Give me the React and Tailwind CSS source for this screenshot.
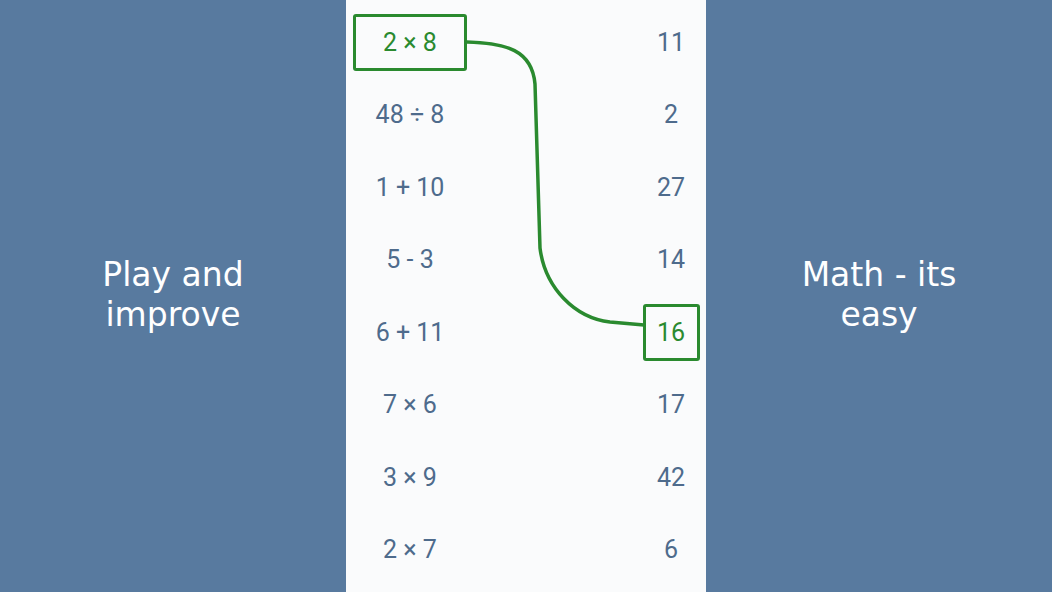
import React from 'react'

const LEFT = ['2 × 8', '48 ÷ 8', '1 + 10', '5 - 3', '6 + 11', '7 × 6', '3 × 9', '2 × 7']
const RIGHT = ['11', '2', '27', '14', '16', '17', '42', '6']

function SidePanel({ lines }) {
  return (
    <div className="flex-1 bg-[#587a9f] flex items-center justify-center">
      <p className="text-white text-[33px] leading-[40px] text-center font-['DejaVu_Sans',sans-serif] -mt-[3px]">
        {lines.map(l => <span key={l} className="block">{l}</span>)}
      </p>
    </div>
  )
}

function Cell({ text, picked, wide }) {
  if (picked) {
    return (
      <div className={`h-[57px] ${wide ? 'w-[114px]' : 'w-[57px]'} border-[3px] border-[#2a8a2f] rounded-[3px] flex items-center justify-center text-[#2a8a2f]`}>
        {text}
      </div>
    )
  }
  return <span>{text}</span>
}

export default function App() {
  return (
    <div className="flex h-[592px] w-[1052px] overflow-hidden">
      <SidePanel lines={['Play and', 'improve']} />

      <div className="relative w-[360px] bg-[#fafbfc] pt-[6px] font-['Roboto',sans-serif] text-[25px] text-[#4e6b8c]">
        {LEFT.map((l, i) => (
          <div key={l} className="h-[72.5px] flex items-center">
            <div className="w-[128px] flex justify-center">
              <Cell text={l} picked={i === 0} wide />
            </div>
            <div className="ml-auto w-[70px] flex justify-center">
              <Cell text={RIGHT[i]} picked={i === 4} />
            </div>
          </div>
        ))}

        {/* connecting line between the two chosen answers */}
        <svg className="absolute inset-0 pointer-events-none" width="360" height="592" viewBox="346 0 360 592">
          <path
            d="M467 42 C 506 43, 532 50, 535 84 L 540 248 C 545 288, 575 318, 610 322 L 644 325"
            fill="none"
            stroke="#2a8a2f"
            strokeWidth="3.5"
            strokeLinecap="round"
          />
        </svg>
      </div>

      <SidePanel lines={['Math - its', 'easy']} />
    </div>
  )
}
